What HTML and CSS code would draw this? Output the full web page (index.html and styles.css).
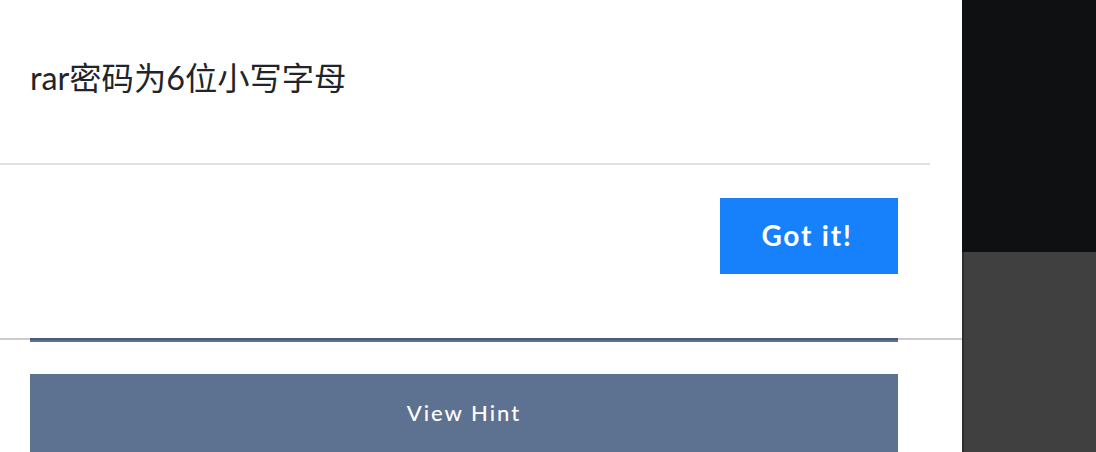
FILE: index.html
```html
<!DOCTYPE html>
<html lang="zh-CN">
  <head>
    <meta charset="UTF-8" />
    <title>Hint</title>
    <link rel="stylesheet" href="styles.css">
  </head>
  <body>
    <div class="page">
      <div class="dialog">
        <div class="dialog-body">rar密码为6位小写字母</div>
        <div class="dialog-footer">
          <button class="btn-got">Got it!</button>
        </div>
      </div>
      <div class="hint-area">
        <div class="hint-strip"></div>
        <button class="btn-hint">View Hint</button>
      </div>
    </div>
    <div class="side">
      <div class="side-top"></div>
      <div class="side-bottom"></div>
    </div>
  </body>
</html>
```

FILE: styles.css
```css
html,
body {
  margin: 0;
  padding: 0;
  height: 100%;
  overflow: hidden;
}
body {
  display: flex;
  font-family: Lato, "Noto Sans CJK SC", sans-serif;
  background: #fff;
}
.page {
  width: 962px;
  flex: none;
  background: #fff;
}
.dialog {
  width: 930px;
}
.dialog-body {
  height: 163px;
  box-sizing: border-box;
  padding: 58px 30px 0 30px;
  font-size: 32.3px;
  line-height: 40px;
  color: #212529;
}
.dialog-footer {
  height: 175px;
  box-sizing: border-box;
  border-top: 2px solid #dee2e6;
  padding: 33px 32px 0 0;
  display: flex;
  justify-content: flex-end;
  align-items: flex-start;
}
.btn-got {
  width: 178px;
  height: 76px;
  border: none;
  border-radius: 0;
  background: #1780fb;
  color: #fff;
  font-family: Lato, sans-serif;
  font-size: 28px;
  font-weight: 700;
  letter-spacing: 1.8px;
  padding: 0 4px 2px 0;
  cursor: pointer;
}
.hint-area {
  padding: 0 64px 0 30px;
  background: linear-gradient(#cccccc, #cccccc) top left / 100% 2px no-repeat;
}
.hint-strip {
  height: 4px;
  background: linear-gradient(#4a5d78 50%, #5b7190 50%);
}
.btn-hint {
  display: block;
  width: 100%;
  height: 80px;
  margin-top: 32px;
  border: none;
  border-radius: 0;
  background: #5d7290;
  color: #fff;
  font-family: Lato, sans-serif;
  font-size: 22px;
  font-weight: 500;
  letter-spacing: 2px;
  padding-bottom: 4px;
  cursor: pointer;
}
.side {
  flex: 1;
  display: flex;
  flex-direction: column;
}
.side-top {
  height: 252px;
  background: #0f1012;
}
.side-bottom {
  flex: 1;
  background: #404040;
  border-left: 2px solid #2e2e2e;
}
```
